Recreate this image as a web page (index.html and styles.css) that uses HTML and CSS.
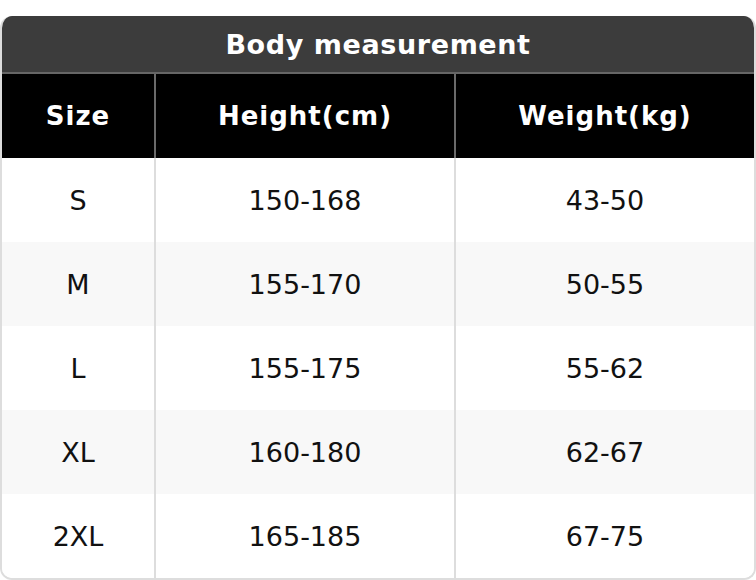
FILE: index.html
```html
<!DOCTYPE html>
<html>
<head>
<meta charset="utf-8">
<link rel="stylesheet" href="styles.css">
</head>
<body>
<div class="card">
  <div class="title">Body measurement</div>
  <div class="grid">
    <div class="cell head">Size</div>
    <div class="cell head sep">Height(cm)</div>
    <div class="cell head sep">Weight(kg)</div>

    <div class="cell">S</div>
    <div class="cell sep">150-168</div>
    <div class="cell sep">43-50</div>

    <div class="cell alt">M</div>
    <div class="cell alt sep">155-170</div>
    <div class="cell alt sep">50-55</div>

    <div class="cell">L</div>
    <div class="cell sep">155-175</div>
    <div class="cell sep">55-62</div>

    <div class="cell alt">XL</div>
    <div class="cell alt sep">160-180</div>
    <div class="cell alt sep">62-67</div>

    <div class="cell">2XL</div>
    <div class="cell sep">165-185</div>
    <div class="cell sep">67-75</div>
  </div>
</div>
</body>
</html>
```
FILE: styles.css
```css
html, body {
  margin: 0;
  padding: 0;
  background: #ffffff;
}
body {
  font-family: "DejaVu Sans", sans-serif;
}
.card {
  margin-top: 16px;
  width: 756px;
  box-sizing: border-box;
  border: 2px solid #dddddd;
  border-top: none;
  border-radius: 12px;
  overflow: hidden;
}
.title {
  background: #3c3c3c;
  color: #ffffff;
  height: 56px;
  border-bottom: 2px solid #666666;
  margin: 0 -2px;
  display: flex;
  align-items: center;
  justify-content: center;
  font-weight: bold;
  font-size: 27px;
  letter-spacing: 0.6px;
}
.grid {
  display: grid;
  grid-template-columns: 152px 300px 300px;
  grid-auto-rows: 84px;
}
.cell {
  display: flex;
  align-items: center;
  justify-content: center;
  font-size: 27px;
  color: #111111;
  background: #ffffff;
}
.cell.alt {
  background: #f8f8f8;
}
.cell.sep {
  border-left: 2px solid #dddddd;
}
.cell.head {
  background: #000000;
  color: #ffffff;
  font-weight: bold;
  font-size: 26px;
  letter-spacing: 1px;
}
.cell.head.sep {
  border-left-color: #6a6a6a;
}
```
